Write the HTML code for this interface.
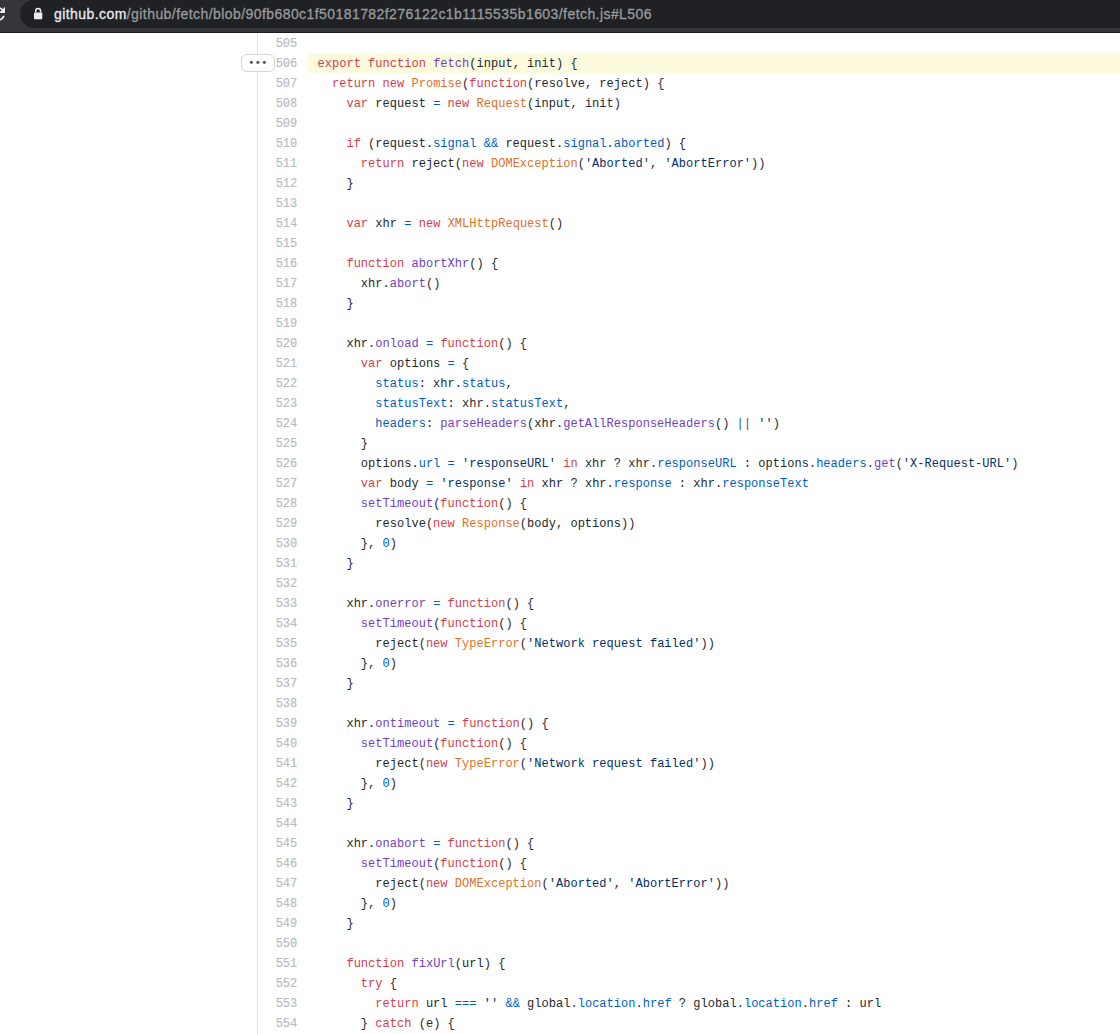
<!DOCTYPE html>
<html><head><meta charset="utf-8"><style>
html,body{margin:0;padding:0;}
body{width:1120px;height:1034px;overflow:hidden;background:#fff;position:relative;}
.bar{position:absolute;left:0;top:0;width:1120px;height:32px;background:#35363a;border-bottom:1px solid #1d1d1f;}
.pill{position:absolute;left:20px;top:0;width:1200px;height:28px;border-radius:14px;background:#202124;}
.url{position:absolute;left:54px;top:4.2px;font-family:"Liberation Sans",sans-serif;font-size:14px;letter-spacing:0.43px;color:#979a9e;white-space:pre;line-height:20px;-webkit-text-stroke:0.3px;}
.url b{font-weight:normal;color:#e8eaed;}
.vl{position:absolute;left:257px;top:33px;width:1px;height:1001px;background:#e3e4e9;}
.r{position:absolute;left:0;width:1120px;height:20px;font-family:"Liberation Mono",monospace;font-size:12px;line-height:20px;white-space:pre;color:#24292e;}
.r .n{position:absolute;right:822.7px;top:1px;color:#b8babd;letter-spacing:0.024px;-webkit-text-stroke:0.15px;}
.r .t{position:absolute;left:317.5px;top:1px;letter-spacing:0.024px;-webkit-text-stroke:0px;}
.hl::before{content:"";position:absolute;left:308px;top:0;right:0;height:20px;background:#fcfbdd;}
i{font-style:normal;}
.k{color:#d03e4e;} .en{color:#6f42c1;} .c{color:#005cc5;} .s{color:#032f62;} .v{color:#d9722a;}
.btn{position:absolute;left:241px;top:54px;width:32px;height:16px;border:1px solid #d1d5da;border-radius:6px;background:#fff;}
.dot{position:absolute;top:6px;width:3px;height:3px;border-radius:50%;background:#586069;}
</style></head><body>
<div class="bar"><div class="pill"></div>
<svg style="position:absolute;left:0;top:0" width="60" height="32" viewBox="0 0 60 32">
<path transform="translate(-13,3.2) scale(0.9)" d="M17.65 6.35C16.2 4.9 14.21 4 12 4c-4.42 0-7.990 3.58-7.99 8s3.57 8 7.99 8c3.73 0 6.84-2.55 7.73-6h-2.08c-.82 2.33-3.04 4-5.65 4-3.310 0-6-2.69-6-6s2.69-6 6-6c1.66 0 3.14.69 4.22 1.78L13 11h7V4l-2.35 2.35z" fill="#e8eaed"/>
<rect x="34" y="12.5" width="8.3" height="6.8" rx="0.8" fill="#e8eaed"/>
<path d="M 35.7 12.5 V 11.0 A 2.45 2.45 0 0 1 40.6 11.0 V 12.5" fill="none" stroke="#e8eaed" stroke-width="1.5"/>
</svg>
<div class="url"><b>github.com</b>/github/fetch/blob/90fb680c1f50181782f276122c1b1115535b1603/fetch.js#L506</div>
</div>
<div class="vl"></div>
<div class="r" style="top:33px"><span class="n">505</span><span class="t"></span></div>
<div class="r hl" style="top:53px"><span class="n">506</span><span class="t"><i class="k">export</i> <i class="k">function</i> <i class="en">fetch</i>(input, init) {</span></div>
<div class="r" style="top:73px"><span class="n">507</span><span class="t">  <i class="k">return</i> <i class="k">new</i> <i class="v">Promise</i>(<i class="k">function</i>(resolve, reject) {</span></div>
<div class="r" style="top:93px"><span class="n">508</span><span class="t">    <i class="k">var</i> request <i class="c">=</i> <i class="k">new</i> <i class="v">Request</i>(input, init)</span></div>
<div class="r" style="top:113px"><span class="n">509</span><span class="t"></span></div>
<div class="r" style="top:133px"><span class="n">510</span><span class="t">    <i class="k">if</i> (request.<i class="c">signal</i> <i class="c">&amp;&amp;</i> request.<i class="c">signal</i>.<i class="c">aborted</i>) {</span></div>
<div class="r" style="top:153px"><span class="n">511</span><span class="t">      <i class="k">return</i> reject(<i class="k">new</i> <i class="v">DOMException</i>(<i class="s">'Aborted'</i>, <i class="s">'AbortError'</i>))</span></div>
<div class="r" style="top:173px"><span class="n">512</span><span class="t">    }</span></div>
<div class="r" style="top:193px"><span class="n">513</span><span class="t"></span></div>
<div class="r" style="top:213px"><span class="n">514</span><span class="t">    <i class="k">var</i> xhr <i class="c">=</i> <i class="k">new</i> <i class="v">XMLHttpRequest</i>()</span></div>
<div class="r" style="top:233px"><span class="n">515</span><span class="t"></span></div>
<div class="r" style="top:253px"><span class="n">516</span><span class="t">    <i class="k">function</i> <i class="en">abortXhr</i>() {</span></div>
<div class="r" style="top:273px"><span class="n">517</span><span class="t">      xhr.<i class="en">abort</i>()</span></div>
<div class="r" style="top:293px"><span class="n">518</span><span class="t">    }</span></div>
<div class="r" style="top:313px"><span class="n">519</span><span class="t"></span></div>
<div class="r" style="top:333px"><span class="n">520</span><span class="t">    xhr.<i class="en">onload</i> <i class="c">=</i> <i class="k">function</i>() {</span></div>
<div class="r" style="top:353px"><span class="n">521</span><span class="t">      <i class="k">var</i> options <i class="c">=</i> {</span></div>
<div class="r" style="top:373px"><span class="n">522</span><span class="t">        <i class="c">status</i>: xhr.<i class="c">status</i>,</span></div>
<div class="r" style="top:393px"><span class="n">523</span><span class="t">        <i class="c">statusText</i>: xhr.<i class="c">statusText</i>,</span></div>
<div class="r" style="top:413px"><span class="n">524</span><span class="t">        <i class="c">headers</i>: <i class="en">parseHeaders</i>(xhr.<i class="en">getAllResponseHeaders</i>() <i class="c">||</i> <i class="s">''</i>)</span></div>
<div class="r" style="top:433px"><span class="n">525</span><span class="t">      }</span></div>
<div class="r" style="top:453px"><span class="n">526</span><span class="t">      options.<i class="c">url</i> <i class="c">=</i> <i class="s">'responseURL'</i> <i class="k">in</i> xhr ? xhr.<i class="c">responseURL</i> : options.<i class="c">headers</i>.<i class="en">get</i>(<i class="s">'X-Request-URL'</i>)</span></div>
<div class="r" style="top:473px"><span class="n">527</span><span class="t">      <i class="k">var</i> body <i class="c">=</i> <i class="s">'response'</i> <i class="k">in</i> xhr ? xhr.<i class="c">response</i> : xhr.<i class="c">responseText</i></span></div>
<div class="r" style="top:493px"><span class="n">528</span><span class="t">      <i class="en">setTimeout</i>(<i class="k">function</i>() {</span></div>
<div class="r" style="top:513px"><span class="n">529</span><span class="t">        resolve(<i class="k">new</i> <i class="v">Response</i>(body, options))</span></div>
<div class="r" style="top:533px"><span class="n">530</span><span class="t">      }, <i class="c">0</i>)</span></div>
<div class="r" style="top:553px"><span class="n">531</span><span class="t">    }</span></div>
<div class="r" style="top:573px"><span class="n">532</span><span class="t"></span></div>
<div class="r" style="top:593px"><span class="n">533</span><span class="t">    xhr.<i class="en">onerror</i> <i class="c">=</i> <i class="k">function</i>() {</span></div>
<div class="r" style="top:613px"><span class="n">534</span><span class="t">      <i class="en">setTimeout</i>(<i class="k">function</i>() {</span></div>
<div class="r" style="top:633px"><span class="n">535</span><span class="t">        reject(<i class="k">new</i> <i class="v">TypeError</i>(<i class="s">'Network request failed'</i>))</span></div>
<div class="r" style="top:653px"><span class="n">536</span><span class="t">      }, <i class="c">0</i>)</span></div>
<div class="r" style="top:673px"><span class="n">537</span><span class="t">    }</span></div>
<div class="r" style="top:693px"><span class="n">538</span><span class="t"></span></div>
<div class="r" style="top:713px"><span class="n">539</span><span class="t">    xhr.<i class="en">ontimeout</i> <i class="c">=</i> <i class="k">function</i>() {</span></div>
<div class="r" style="top:733px"><span class="n">540</span><span class="t">      <i class="en">setTimeout</i>(<i class="k">function</i>() {</span></div>
<div class="r" style="top:753px"><span class="n">541</span><span class="t">        reject(<i class="k">new</i> <i class="v">TypeError</i>(<i class="s">'Network request failed'</i>))</span></div>
<div class="r" style="top:773px"><span class="n">542</span><span class="t">      }, <i class="c">0</i>)</span></div>
<div class="r" style="top:793px"><span class="n">543</span><span class="t">    }</span></div>
<div class="r" style="top:813px"><span class="n">544</span><span class="t"></span></div>
<div class="r" style="top:833px"><span class="n">545</span><span class="t">    xhr.<i class="en">onabort</i> <i class="c">=</i> <i class="k">function</i>() {</span></div>
<div class="r" style="top:853px"><span class="n">546</span><span class="t">      <i class="en">setTimeout</i>(<i class="k">function</i>() {</span></div>
<div class="r" style="top:873px"><span class="n">547</span><span class="t">        reject(<i class="k">new</i> <i class="v">DOMException</i>(<i class="s">'Aborted'</i>, <i class="s">'AbortError'</i>))</span></div>
<div class="r" style="top:893px"><span class="n">548</span><span class="t">      }, <i class="c">0</i>)</span></div>
<div class="r" style="top:913px"><span class="n">549</span><span class="t">    }</span></div>
<div class="r" style="top:933px"><span class="n">550</span><span class="t"></span></div>
<div class="r" style="top:953px"><span class="n">551</span><span class="t">    <i class="k">function</i> <i class="en">fixUrl</i>(url) {</span></div>
<div class="r" style="top:973px"><span class="n">552</span><span class="t">      <i class="k">try</i> {</span></div>
<div class="r" style="top:993px"><span class="n">553</span><span class="t">        <i class="k">return</i> url <i class="c">===</i> <i class="s">''</i> <i class="c">&amp;&amp;</i> global.<i class="c">location</i>.<i class="c">href</i> ? global.<i class="c">location</i>.<i class="c">href</i> : url</span></div>
<div class="r" style="top:1013px"><span class="n">554</span><span class="t">      } <i class="k">catch</i> (e) {</span></div>
<div class="r" style="top:1033px"><span class="n">555</span><span class="t">        <i class="k">return</i> url</span></div>
<div class="btn"></div><svg style="position:absolute;left:0;top:0" width="300" height="80"><circle cx="251.4" cy="62.3" r="1.6" fill="#586069"/><circle cx="257.9" cy="62.3" r="1.6" fill="#586069"/><circle cx="264.4" cy="62.3" r="1.6" fill="#586069"/></svg>
</body></html>
